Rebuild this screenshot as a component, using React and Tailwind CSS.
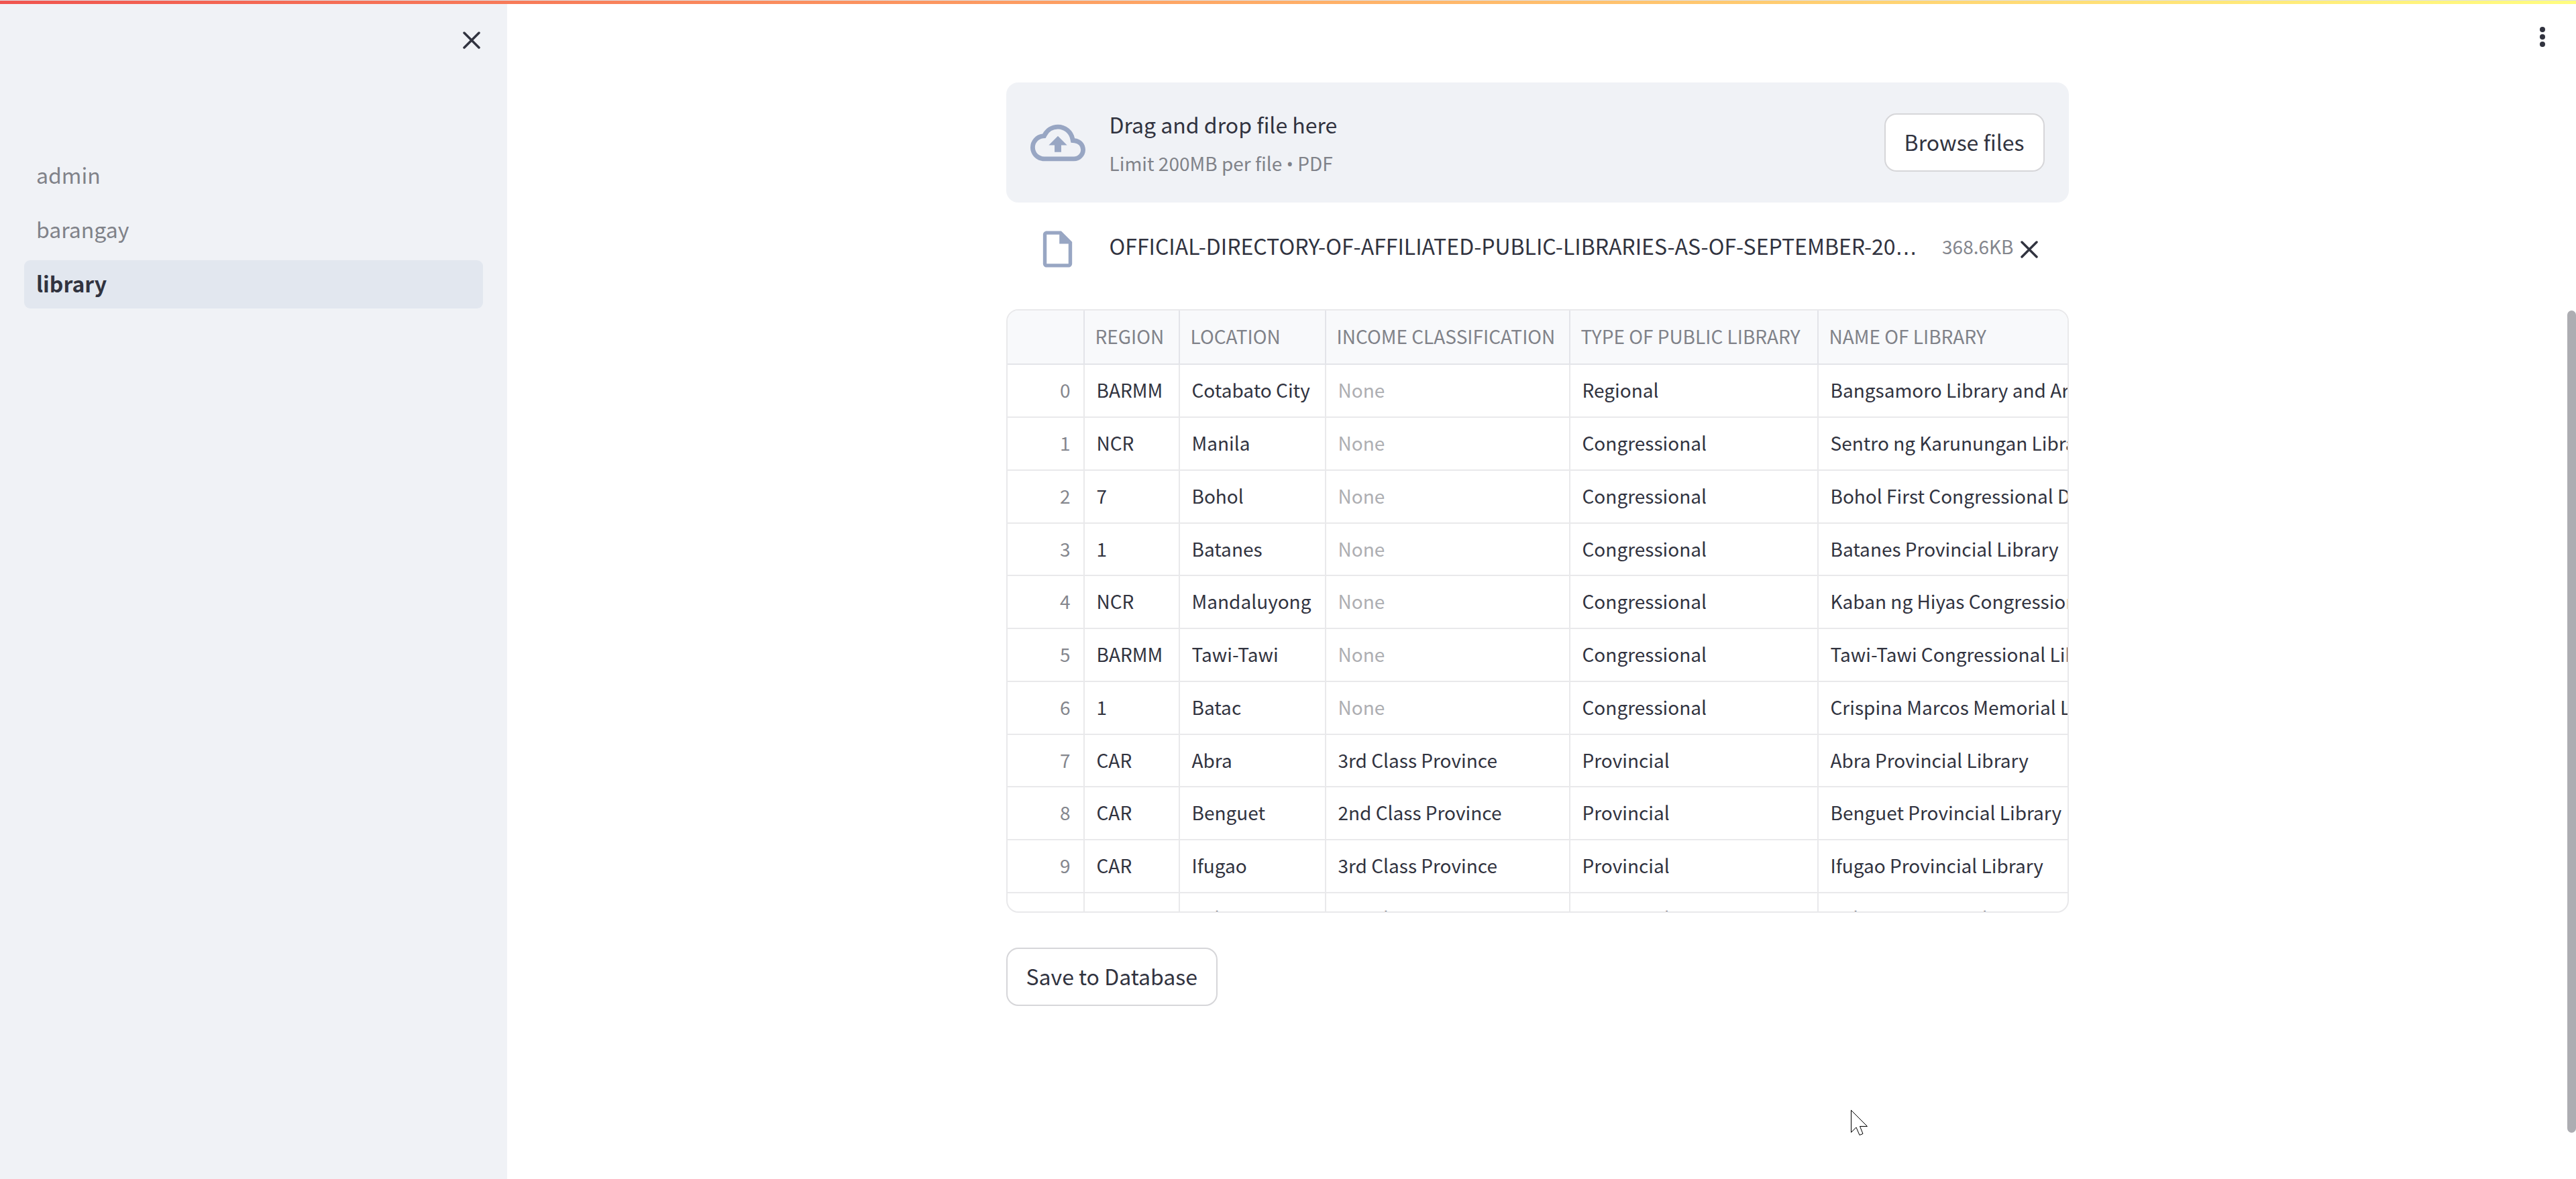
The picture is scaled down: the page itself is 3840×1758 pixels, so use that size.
import React from "react";

const pages = [
  { name: "admin", active: false },
  { name: "barangay", active: false },
  { name: "library", active: true },
];

const columns = [
  "REGION",
  "LOCATION",
  "INCOME CLASSIFICATION",
  "TYPE OF PUBLIC LIBRARY",
  "NAME OF LIBRARY",
];

const rows = [
  ["BARMM", "Cotabato City", null, "Regional", "Bangsamoro Library and Archives"],
  ["NCR", "Manila", null, "Congressional", "Sentro ng Karunungan Library"],
  ["7", "Bohol", null, "Congressional", "Bohol First Congressional District Library"],
  ["1", "Batanes", null, "Congressional", "Batanes Provincial Library"],
  ["NCR", "Mandaluyong", null, "Congressional", "Kaban ng Hiyas Congressional Library"],
  ["BARMM", "Tawi-Tawi", null, "Congressional", "Tawi-Tawi Congressional Library"],
  ["1", "Batac", null, "Congressional", "Crispina Marcos Memorial Library"],
  ["CAR", "Abra", "3rd Class Province", "Provincial", "Abra Provincial Library"],
  ["CAR", "Benguet", "2nd Class Province", "Provincial", "Benguet Provincial Library"],
  ["CAR", "Ifugao", "3rd Class Province", "Provincial", "Ifugao Provincial Library"],
  ["CAR", "Kalinga", "3rd Class Province", "Provincial", "Kalinga Provincial Library"],
];

function CloseIcon() {
  return (
    <svg viewBox="0 0 26 26" className="size-[26px]" fill="none" stroke="currentColor" strokeWidth="3.5" strokeLinecap="round" aria-hidden="true">
      <path d="M2 2l22 22M24 2L2 24" />
    </svg>
  );
}

function CloudUploadIcon() {
  return (
    <svg viewBox="0 0 24 24" className="size-[82px] shrink-0 text-[#98a6c3]" fill="currentColor" aria-hidden="true">
      <path d="M19.35 10.04A7.49 7.49 0 0 0 12 4C9.11 4 6.6 5.64 5.35 8.04A5.994 5.994 0 0 0 0 14c0 3.31 2.69 6 6 6h13c2.76 0 5-2.24 5-5 0-2.64-2.05-4.78-4.65-4.96zM19 18H6c-2.21 0-4-1.79-4-4 0-2.05 1.53-3.76 3.56-3.97l1.07-.11.5-.95A5.469 5.469 0 0 1 12 6c2.62 0 4.88 1.86 5.39 4.43l.3 1.5 1.53.11A2.98 2.98 0 0 1 22 15c0 1.65-1.35 3-3 3zM8 13h2.55v3h2.9v-3H16l-4-4-4 4z" />
    </svg>
  );
}

function FileIcon() {
  return (
    <svg viewBox="0 0 24 24" className="size-[65px] text-[#98a6c3]" fill="currentColor" aria-hidden="true">
      <path d="M14 2H6c-1.1 0-1.99.9-1.99 2L4 20c0 1.1.89 2 1.99 2H18c1.1 0 2-.9 2-2V8l-6-6zM6 20V4h7v5h5v11H6z" />
    </svg>
  );
}

function Button({ children }) {
  return (
    <button
      type="button"
      className="h-[87px] shrink-0 rounded-[18px] border-2 border-[#d6d6d9] bg-white px-7 pb-[3px] text-[32px] leading-[58px] whitespace-nowrap"
    >
      {children}
    </button>
  );
}

function Sidebar() {
  return (
    <aside className="w-[756px] shrink-0 bg-[#f0f2f6]">
      <div className="flex justify-end pt-[41px] pr-10">
        <button type="button" aria-label="Close sidebar">
          <CloseIcon />
        </button>
      </div>
      <nav className="mt-[153px] flex flex-col gap-[9px] px-9">
        {pages.map((page) => (
          <a
            key={page.name}
            href={"#" + page.name}
            aria-current={page.active ? "page" : undefined}
            className={
              page.active
                ? "h-[72px] rounded-[9px] bg-[#e2e7ef] px-[18px] text-[32px] leading-[68px] font-semibold"
                : "h-[72px] rounded-[9px] px-[18px] text-[32px] leading-[68px] text-[#808289]"
            }
          >
            {page.name}
          </a>
        ))}
      </nav>
    </aside>
  );
}

function Uploader() {
  return (
    <section aria-label="File upload">
      <div className="flex items-center rounded-[18px] bg-[#f0f2f6] px-9 py-[31px]">
        <CloudUploadIcon />
        <div className="ml-9 flex-1">
          <div className="text-[32px] leading-[62px]">Drag and drop file here</div>
          <div className="text-[28px] leading-[54px] text-[#808289]">
            Limit 200MB per file <span className="font-['Open_Sans',sans-serif]">•</span> PDF
          </div>
        </div>
        <Button>Browse files</Button>
      </div>
      <div className="flex items-start px-9 pt-[37px]">
        <div className="flex w-[82px] shrink-0 justify-center">
          <FileIcon />
        </div>
        <div className="ml-9 min-w-0 flex-1 overflow-hidden text-[32px] leading-[54px] whitespace-nowrap">
          OFFICIAL-DIRECTORY-OF-AFFILIATED-PUBLIC-LIBRARIES-AS-OF-SEPTEMBER-20
          <span className="font-['DejaVu_Sans',sans-serif]">…</span>
        </div>
        <div className="ml-[18px] text-[28px] leading-[56px] text-[#84868d]">368.6KB</div>
        <button type="button" aria-label="Remove file" className="mr-[10px] ml-[10px] self-center">
          <CloseIcon />
        </button>
      </div>
    </section>
  );
}

function LibraryTable() {
  return (
    <div className="mt-[57px] h-[900px] overflow-hidden rounded-[18px] border-2 border-[#e9e9eb]">
      <table className="w-[2000px] table-fixed border-separate border-spacing-0 text-left text-[28px] leading-10 whitespace-nowrap">
        <colgroup>
          <col className="w-[115px]" />
          <col className="w-[142px]" />
          <col className="w-[218px]" />
          <col className="w-[364px]" />
          <col className="w-[370px]" />
          <col />
        </colgroup>
        <thead>
          <tr className="h-[81px] bg-[#f8f9fb] text-[#808289]">
            <th aria-label="Index" className="border-r-2 border-b-2 border-[#e3e4e9]" />
            {columns.map((column) => (
              <th key={column} scope="col" className="border-r-2 border-b-2 border-[#e3e4e9] pb-[3px] pl-4 font-normal">
                {column}
              </th>
            ))}
          </tr>
        </thead>
        <tbody>
          {rows.map((row, index) => (
            <tr key={index} className="h-[79px] nth-[4n]:h-[78px]">
              <th scope="row" className="border-r-2 border-b-2 border-[#e9e9eb] pr-[19px] pb-[3px] text-right font-normal text-[#84868d]">
                {index}
              </th>
              {row.map((value, cell) => (
                <td key={cell} className="border-r-2 border-b-2 border-[#e9e9eb] pb-[3px] pl-[18px]">
                  {value === null ? <span className="text-[#adaeb2]">None</span> : value}
                </td>
              ))}
            </tr>
          ))}
        </tbody>
      </table>
    </div>
  );
}

function MouseCursor() {
  return (
    <svg viewBox="0 0 27 40" className="pointer-events-none absolute top-[1654px] left-[2758px] w-[27px]" fill="white" stroke="black" strokeWidth="1" aria-hidden="true">
      <path d="M1.500 1.500V34.500L9 27L14 38.500L19 36.500L14.500 25.500H25.500Z" />
    </svg>
  );
}

export default function App() {
  return (
    <div className="relative flex min-h-screen flex-col bg-white font-['Noto_Sans_CJK_SC',sans-serif] text-[#31333f]">
      <div className="h-[6px] border-t border-[#dfe1e5] bg-linear-to-r from-[#f0544f] to-[#fffd80]" />
      <div className="flex flex-1">
        <Sidebar />
        <main className="min-w-0 flex-1">
          <header className="flex justify-end pt-[31px] pr-[32px]">
            <button type="button" aria-label="Main menu">
              <svg viewBox="0 0 10 36" className="h-9 w-[10px]" fill="currentColor" aria-hidden="true">
                <circle cx="5" cy="7" r="4" />
                <circle cx="5" cy="18" r="4" />
                <circle cx="5" cy="29" r="4" />
              </svg>
            </button>
          </header>
          <div className="mx-auto mt-[50px] w-[1584px] max-w-full">
            <Uploader />
            <LibraryTable />
            <div className="mt-[52px]">
              <Button>Save to Database</Button>
            </div>
          </div>
        </main>
        <div className="w-[13px] shrink-0 pt-[457px]">
          <div className="h-[1226px] rounded-full bg-[#adadb2]" />
        </div>
      </div>
      <MouseCursor />
    </div>
  );
}
